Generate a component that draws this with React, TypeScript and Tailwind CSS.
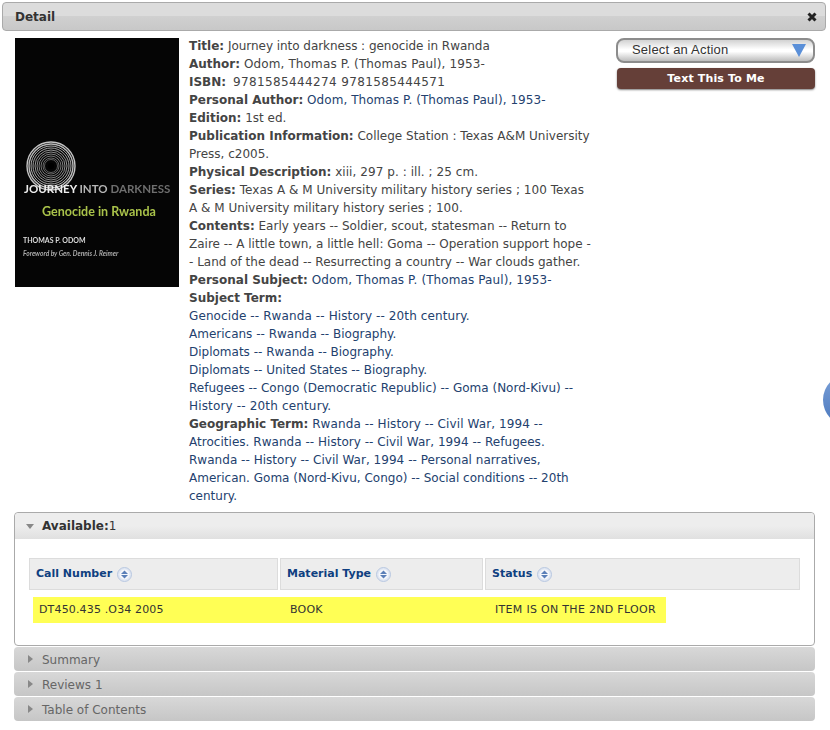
import React from "react";

const V = "font-['DejaVu_Sans',Verdana,sans-serif]";

function Sort() {
  return (
    <svg width="15" height="15" viewBox="0 0 15 15" className="inline-block shrink-0">
      <circle cx="7.5" cy="7.5" r="7" fill="#dfe6f2" stroke="#b9c8e0" />
      <circle cx="7.5" cy="7.5" r="5" fill="#f4f6fa" />
      <path d="M7.5 3.5 L11 7 H4 Z" fill="#5a7fb8" />
      <path d="M7.5 11.5 L11 8 H4 Z" fill="#5a7fb8" />
    </svg>
  );
}

function Th({ label, w }: { label: string; w: string }) {
  return (
    <div className={`${w} h-[32px] bg-[#ededed] border border-[#dcdcdc] flex items-center pl-[6px] gap-[5px] text-[11px] font-bold text-[#0f3f80]`}>
      <span>{label}</span>
      <Sort />
    </div>
  );
}

function Collapsed({ label }: { label: string }) {
  return (
    <div className="h-[24px] rounded-[4px] bg-gradient-to-b from-[#d8d8d8] to-[#c6c6c6] flex items-center text-[12px] relative pl-[28px] pt-[1px]">
      <svg width="5" height="8" viewBox="0 0 5 8" className="absolute left-[14px] top-[8px]">
        <path d="M0 0 L5 4 L0 8 Z" fill="#888" />
      </svg>
      {label}
    </div>
  );
}

const L = ({ children }: { children: React.ReactNode }) => <b className="font-bold text-[#444]">{children}</b>;
const A = ({ children, t }: { children: React.ReactNode; t?: string }) => (
  <span className={`text-[#23416e] ${t ?? ""}`}>{children}</span>
);

export default function App() {
  return (
    <div className={`${V} w-[830px] h-[730px] bg-white overflow-hidden relative text-[12px] leading-[18px] text-[#444]`}>
      <div className="pt-[2px] pl-[2px] pr-[4px]">
        <div className="h-[29px] border border-[#aaa] rounded-[4px] bg-[linear-gradient(#dcdcdc_0%,#dcdcdc_47%,#d0d0d0_50%,#c8c8c8_100%)] flex items-center justify-between pl-[12px] pr-[8px] text-[12px] font-bold text-[#333]">
          <span>Detail</span>
          <svg width="10" height="10" viewBox="0 0 10 10">
            <path d="M1.5 1.5 L8.5 8.5 M8.5 1.5 L1.5 8.5" stroke="#222" strokeWidth="3" />
          </svg>
        </div>
      </div>

      <div className="flex pl-[15px] pt-[7px]">
        <div className="w-[164px] h-[249px] shrink-0 bg-[#050505] relative overflow-hidden text-center">
          <svg width="50" height="50" viewBox="0 0 50 50" className="absolute left-[11px] top-[103px] blur-[0.4px]">
            {[24, 22, 20, 18, 16, 14, 12, 10, 8, 6.5].map((r, i) => (
              <circle key={r} cx="25" cy="25" r={r} fill="none" stroke="#c4c4c4" strokeWidth={i < 2 ? 1.4 : 1} opacity={1 - i * 0.06} />
            ))}
            <circle cx="25" cy="25" r="3" fill="#000" />
          </svg>
          <div className="absolute left-[9px] top-[144px] text-left text-[11.5px] leading-[14px] font-bold whitespace-nowrap font-['Lato',sans-serif] blur-[0.3px]">
            <span className="text-[#eee]">JOURNEY </span>
            <span className="text-[#b5b5b5]">INTO </span>
            <span className="text-[#6e6e6e]">DARKNESS</span>
          </div>
          <div className="absolute left-[27px] top-[167px] text-[#a9c24a] text-[12.5px] leading-[14px] font-bold whitespace-nowrap font-['Lato',sans-serif] blur-[0.3px]">
            Genocide in Rwanda
          </div>
          <div className="absolute left-[8px] top-[197px] text-[#ddd] text-[7px] leading-[10px] font-bold font-['Lato',sans-serif] blur-[0.2px]">
            THOMAS P. ODOM
          </div>
          <div className="absolute left-[8px] top-[211px] text-[#aaa] text-[6.6px] leading-[8px] italic font-bold whitespace-nowrap font-['Lato',sans-serif] blur-[0.2px]">
            Foreword by Gen. Dennis J. Reimer
          </div>
        </div>

        <div className="w-[427px] ml-[10px] mt-[-1px] shrink-0 pr-[20px]">
          <div><L>Title:</L> <span className="tracking-[-0.04px]">Journey into darkness : genocide in Rwanda</span></div>
          <div><L>Author:</L> <span className="tracking-[0.13px]">Odom, Thomas P. (Thomas Paul), 1953-</span></div>
          <div><L>ISBN:</L> <span className="ml-[3px] tracking-[0.37px]">9781585444274 9781585444571</span></div>
          <div><L>Personal Author:</L> <A t="tracking-[0.06px]">Odom, Thomas P. (Thomas Paul), 1953-</A></div>
          <div><L>Edition:</L> 1st ed.</div>
          <div><L>Publication Information:</L> College Station : Texas A&amp;M University<br />Press, c2005.</div>
          <div><L>Physical Description:</L> <span className="tracking-[0.06px]">xiii, 297 p. : ill. ; 25 cm.</span></div>
          <div><L>Series:</L> <span className="tracking-[0.03px]">Texas A &amp; M University military history series ; 100 Texas<br />A &amp; M University military history series ; 100.</span></div>
          <div><L>Contents:</L> Early years -- Soldier, scout, statesman -- Return to<br />Zaire -- A little town, a little hell: Goma -- Operation support hope -<br />- Land of the dead -- Resurrecting a country -- War clouds gather.</div>
          <div><L>Personal Subject:</L> <A t="tracking-[0.1px]">Odom, Thomas P. (Thomas Paul), 1953-</A></div>
          <div><L>Subject Term:</L></div>
          <A t="block">
            <div className="tracking-[0.11px]">Genocide -- Rwanda -- History -- 20th century.</div>
            <div>Americans -- Rwanda -- Biography.</div>
            <div>Diplomats -- Rwanda -- Biography.</div>
            <div>Diplomats -- United States -- Biography.</div>
            <div>Refugees -- Congo (Democratic Republic) -- Goma (Nord-Kivu) --<br /><span className="tracking-[0.16px]">History -- 20th century.</span></div>
          </A>
          <div><L>Geographic Term:</L> <A t="tracking-[0.1px]">Rwanda -- History -- Civil War, 1994 --</A><br /><A t="tracking-[0.03px]">Atrocities. Rwanda -- History -- Civil War, 1994 -- Refugees.</A><br /><A t="tracking-[0.03px]">Rwanda -- History -- Civil War, 1994 -- Personal narratives,</A><br /><A>American. Goma (Nord-Kivu, Congo) -- Social conditions -- 20th</A><br /><A>century.</A></div>
        </div>

        <div className="w-[199px] shrink-0">
          <div className="h-[25px] rounded-[8px] border-2 border-[#8c8c8c] bg-[linear-gradient(#d2d2d2_0%,#ffffff_45%,#ffffff_55%,#bdbdbd_100%)] flex items-center justify-between pl-[14px] pr-[7px] pb-[1px] text-[13px] font-['Liberation_Sans',Arial,sans-serif] text-[#333] tracking-[0.2px]">
            <span>Select an Action</span>
            <svg width="14" height="13" viewBox="0 0 14 13" className="mt-[1px]"><path d="M0 0 H14 L7 13 Z" fill="#5a8fd8" /></svg>
          </div>
          <div className="mt-[5px] ml-[1px] h-[21px] pt-[1px] rounded-[4px] bg-[#653f38] shadow-[0_1px_2px_rgba(0,0,0,0.5)] text-white text-[11px] tracking-[0.15px] font-bold flex items-center justify-center">
            Text This To Me
          </div>
        </div>
      </div>

      <div className="absolute left-[14px] top-[512px] w-[801px]">
        <div className="h-[134px] border border-[#aaa] rounded-[4px] bg-white">
          <div className="h-[26px] bg-[linear-gradient(#ededed_0%,#ededed_50%,#e0e0e0_100%)] rounded-t-[4px] flex items-center text-[12px] text-[#333] relative pl-[27px]">
            <svg width="8" height="5" viewBox="0 0 8 5" className="absolute left-[11px] top-[11px]"><path d="M0 0 H8 L4 5 Z" fill="#888" /></svg>
            <span className="font-bold">Available:</span><span>1</span>
          </div>
          <div className="flex gap-[2px] mt-[19px] ml-[14px] w-[771px]">
            <Th label="Call Number" w="w-[249px]" />
            <Th label="Material Type" w="w-[203px]" />
            <Th label="Status" w="w-[315px]" />
          </div>
          <div className="ml-[18px] mt-[7px] w-[633px] h-[26px] bg-[#ffff55] flex items-center pb-[1px] text-[11px] text-[#333]">
            <span className="pl-[6px] w-[257px] tracking-[0.15px]">DT450.435 .O34 2005</span>
            <span className="w-[205px] tracking-[0.2px]">BOOK</span>
            <span className="tracking-[0.3px]">ITEM IS ON THE 2ND FLOOR</span>
          </div>
        </div>
        <div className="mt-[1px] flex flex-col gap-[1px] text-[#666]">
          <Collapsed label="Summary" />
          <Collapsed label="Reviews 1" />
          <Collapsed label="Table of Contents" />
        </div>
      </div>

      <div className="absolute left-[823px] top-[374px] w-[52px] h-[52px] rounded-full bg-gradient-to-b from-[#7ba0d8] to-[#4a78bd]" />
    </div>
  );
}
